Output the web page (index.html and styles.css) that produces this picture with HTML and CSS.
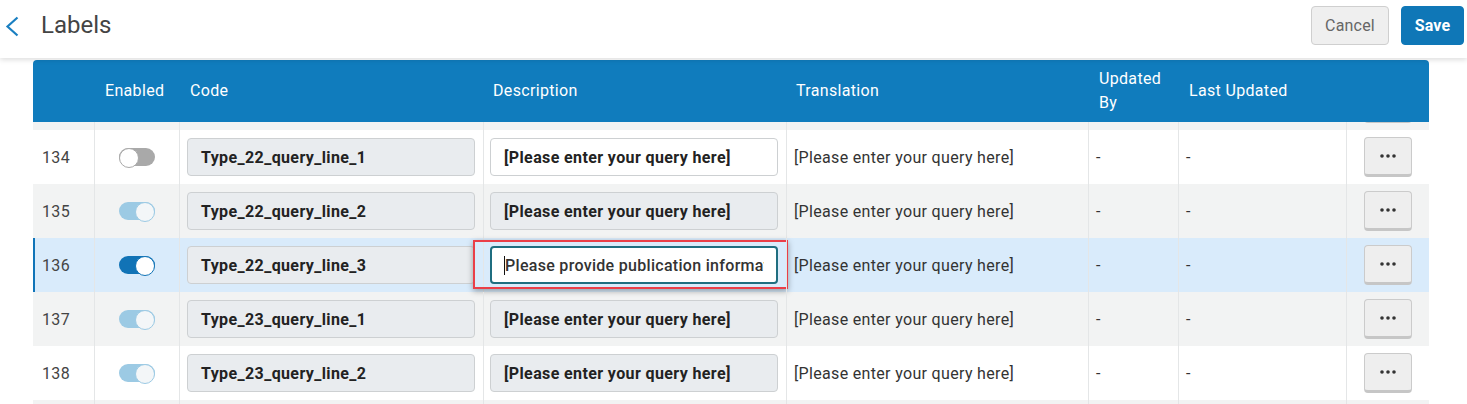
FILE: index.html
```html
<!DOCTYPE html>
<html lang="en">
<head>
<meta charset="utf-8">
<title>Labels</title>
<link rel="stylesheet" href="styles.css">
</head>
<body>
<header class="topbar">
  <button class="back" aria-label="Back">
    <svg width="14" height="24" viewBox="0 0 14 24"><polyline points="12.5,3.5 2.5,12.5 12.5,21.5" fill="none" stroke="#1a7fc1" stroke-width="2.2"/></svg>
  </button>
  <h1 class="title">Labels</h1>
  <div class="actions">
    <button class="btn btn-cancel">Cancel</button>
    <button class="btn btn-save">Save</button>
  </div>
</header>

<main class="table">
  <div class="grid thead">
    <div class="th"></div>
    <div class="th">Enabled</div>
    <div class="th">Code</div>
    <div class="th">Description</div>
    <div class="th">Translation</div>
    <div class="th">Updated By</div>
    <div class="th">Last Updated</div>
    <div class="th"></div>
  </div>
  <div class="tbody">
    <div class="grid tr stripe partial">
      <div class="td"></div><div class="td"></div><div class="td"></div><div class="td"></div><div class="td"></div><div class="td"></div><div class="td"></div>
      <div class="td center"><button class="more"><svg width="16" height="4" viewBox="0 0 16 4"><circle cx="2" cy="2" r="1.8"/><circle cx="8" cy="2" r="1.8"/><circle cx="14" cy="2" r="1.8"/></svg></button></div>
    </div>

    <div class="grid tr">
      <div class="td num">134</div>
      <div class="td center"><span class="toggle"></span></div>
      <div class="td field-cell"><div class="field">Type_22_query_line_1</div></div>
      <div class="td field-cell desc"><div class="field editable">[Please enter your query here]</div></div>
      <div class="td text">[Please enter your query here]</div>
      <div class="td text">-</div>
      <div class="td text">-</div>
      <div class="td center"><button class="more"><svg width="16" height="4" viewBox="0 0 16 4"><circle cx="2" cy="2" r="1.8"/><circle cx="8" cy="2" r="1.8"/><circle cx="14" cy="2" r="1.8"/></svg></button></div>
    </div>

    <div class="grid tr stripe">
      <div class="td num">135</div>
      <div class="td center"><span class="toggle on muted"></span></div>
      <div class="td field-cell"><div class="field">Type_22_query_line_2</div></div>
      <div class="td field-cell desc"><div class="field">[Please enter your query here]</div></div>
      <div class="td text">[Please enter your query here]</div>
      <div class="td text">-</div>
      <div class="td text">-</div>
      <div class="td center"><button class="more"><svg width="16" height="4" viewBox="0 0 16 4"><circle cx="2" cy="2" r="1.8"/><circle cx="8" cy="2" r="1.8"/><circle cx="14" cy="2" r="1.8"/></svg></button></div>
    </div>

    <div class="grid tr selected">
      <div class="td num">136</div>
      <div class="td center"><span class="toggle on active"></span></div>
      <div class="td field-cell"><div class="field">Type_22_query_line_3</div></div>
      <div class="td field-cell desc">
        <div class="field focus"><span class="caret"></span><span class="clip">Please provide publication information</span></div>
        <span class="highlight"></span>
      </div>
      <div class="td text">[Please enter your query here]</div>
      <div class="td text">-</div>
      <div class="td text">-</div>
      <div class="td center"><button class="more"><svg width="16" height="4" viewBox="0 0 16 4"><circle cx="2" cy="2" r="1.8"/><circle cx="8" cy="2" r="1.8"/><circle cx="14" cy="2" r="1.8"/></svg></button></div>
    </div>

    <div class="grid tr stripe">
      <div class="td num">137</div>
      <div class="td center"><span class="toggle on muted"></span></div>
      <div class="td field-cell"><div class="field">Type_23_query_line_1</div></div>
      <div class="td field-cell desc"><div class="field">[Please enter your query here]</div></div>
      <div class="td text">[Please enter your query here]</div>
      <div class="td text">-</div>
      <div class="td text">-</div>
      <div class="td center"><button class="more"><svg width="16" height="4" viewBox="0 0 16 4"><circle cx="2" cy="2" r="1.8"/><circle cx="8" cy="2" r="1.8"/><circle cx="14" cy="2" r="1.8"/></svg></button></div>
    </div>

    <div class="grid tr">
      <div class="td num">138</div>
      <div class="td center"><span class="toggle on muted"></span></div>
      <div class="td field-cell"><div class="field">Type_23_query_line_2</div></div>
      <div class="td field-cell desc"><div class="field">[Please enter your query here]</div></div>
      <div class="td text">[Please enter your query here]</div>
      <div class="td text">-</div>
      <div class="td text">-</div>
      <div class="td center"><button class="more"><svg width="16" height="4" viewBox="0 0 16 4"><circle cx="2" cy="2" r="1.8"/><circle cx="8" cy="2" r="1.8"/><circle cx="14" cy="2" r="1.8"/></svg></button></div>
    </div>

    <div class="grid tr stripe">
      <div class="td"></div><div class="td"></div><div class="td"></div><div class="td"></div><div class="td"></div><div class="td"></div><div class="td"></div><div class="td"></div>
    </div>
  </div>
</main>
</body>
</html>
```

FILE: styles.css
```css
* { box-sizing: border-box; }

html, body {
  margin: 0;
  height: 404px;
  overflow: hidden;
  background: #fff;
  font-family: Roboto, "Liberation Sans", sans-serif;
  font-size: 16px;
  color: #333;
}

/* Top bar */
.topbar {
  position: relative;
  z-index: 2;
  display: flex;
  align-items: flex-start;
  height: 58px;
  padding: 6px 3px 0 5px;
  background: #fff;
  box-shadow: 0 2px 5px rgba(0, 0, 0, 0.13);
}
.back {
  display: flex;
  align-items: center;
  height: 40px;
  padding: 0;
  border: 0;
  background: none;
}
.title {
  margin: 0 0 0 22px;
  font-size: 24px;
  font-weight: 400;
  line-height: 39px;
  color: #444;
}
.actions {
  margin-left: auto;
  display: flex;
  gap: 12px;
}
.btn {
  height: 39px;
  padding: 0;
  border-radius: 4px;
  font-family: inherit;
  font-size: 16px;
  letter-spacing: 0.2px;
}
.btn-cancel {
  width: 78px;
  background: #efefef;
  border: 1px solid #cfcfcf;
  color: #666;
}
.btn-save {
  width: 63px;
  background: #0f77b7;
  border: 1px solid #0f77b7;
  color: #fff;
  font-weight: 700;
}

/* Table */
.table {
  width: 1396px;
  margin: 2px 0 0 33px;
  letter-spacing: 0.33px;
}
.grid {
  display: grid;
  grid-template-columns: 61px 85px 304px 303px 302px 90px 168px 83px;
}
.thead {
  height: 62px;
  background: #107cbd;
  color: #fff;
  border-radius: 4px 4px 0 0;
}
.th {
  display: flex;
  align-items: center;
  padding: 0 8px 0 11px;
  line-height: 24px;
}
.th:nth-child(4), .th:nth-child(5) { padding-left: 10px; }

.tbody {
  height: 282px;
  overflow: hidden;
}
.tr {
  height: 54px;
  background: #fff;
}
.tr.stripe { background: #f2f3f3; }
.tr.selected { background: #d9ebfb; }
.tr.partial { margin-top: -46px; }

.td {
  position: relative;
  display: flex;
  align-items: center;
  padding: 0 7px;
  border-left: 1px solid #e4e6e7;
  white-space: nowrap;
}
.td:first-child {
  border-left: 2px solid transparent;
  padding-left: 7px;
  color: #444;
}
.selected .td:first-child { border-left-color: #1074b8; }
.td.center { justify-content: center; }
.td.field-cell { padding: 0 8px 0 7px; }
.td.field-cell.desc { padding: 0 8px 0 6px; }
.td.text { color: #333; }

/* Fields */
.field {
  display: flex;
  align-items: center;
  width: 100%;
  height: 38px;
  padding: 0 12px 0 13px;
  border: 1px solid #cdd0d2;
  border-radius: 4px;
  background: #e9ecef;
  font-weight: 700;
  color: #222;
  letter-spacing: 0.38px;
  white-space: nowrap;
  overflow: hidden;
}
.field.editable { background: #fff; }
.field.focus {
  background: #fff;
  border: 2px solid #1f6e80;
  padding-left: 12px;
  font-weight: 500;
  color: #333;
  letter-spacing: 0.3px;
}
.caret {
  flex: none;
  width: 1px;
  height: 19px;
  background: #111;
}
.clip {
  display: block;
  overflow: hidden;
  min-width: 0;
}
.highlight {
  position: absolute;
  left: -11px;
  top: 2px;
  width: 315px;
  height: 49px;
  border: 2.5px solid #ea3f48;
  box-shadow: 0 2px 6px rgba(0, 0, 0, 0.35);
  pointer-events: none;
}

/* Toggle */
.toggle {
  position: relative;
  display: block;
  width: 36px;
  height: 18px;
  border-radius: 9px;
  background: #a9a9a9;
}
.toggle::after {
  content: "";
  position: absolute;
  top: 0;
  left: 0;
  width: 18px;
  height: 18px;
  border-radius: 50%;
  background: #fff;
  border: 1.5px solid #a9a9a9;
}
.toggle.on::after { left: auto; right: 0; }
.toggle.muted { background: #9ccae4; }
.toggle.muted::after { background: #f3f6f8; border-color: #9ccae4; }
.toggle.active { background: #1173b6; }
.toggle.active::after { background: #fff; border-color: #1173b6; }

/* More button */
.more {
  display: flex;
  align-items: center;
  justify-content: center;
  width: 48px;
  height: 40px;
  padding: 0;
  background: #eeeeee;
  border: 1px solid #cbcbcb;
  border-bottom: 3px solid #c6c6c6;
  border-radius: 4px;
  fill: #333;
}
```
